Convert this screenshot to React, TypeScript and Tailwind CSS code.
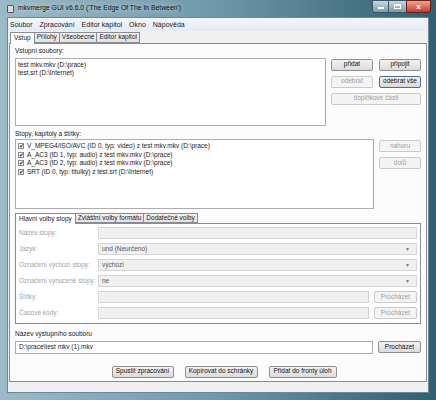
import { ReactNode } from 'react';

const Btn = ({
  children,
  disabled,
  focus,
  className = '',
}: {
  children: ReactNode;
  disabled?: boolean;
  focus?: boolean;
  className?: string;
}) => (
  <div
    className={`flex h-[12px] items-center justify-center whitespace-nowrap rounded-[2px] border ${
      disabled
        ? 'border-[#c9c9c9] bg-[#f4f4f4] text-[#a0a0a0]'
        : focus
        ? 'border-[#4a6f8a] bg-gradient-to-b from-[#f2f2f2] to-[#d9d9d9] text-[#111]'
        : 'border-[#8e8f8f] bg-gradient-to-b from-[#f2f2f2] to-[#dcdcdc] text-[#111]'
    } ${className}`}
  >
    {children}
  </div>
);

const Row = ({ label, children }: { label: string; children: ReactNode }) => (
  <div className="flex h-[12px] items-center">
    <div className="w-[79px] shrink-0 whitespace-nowrap text-[#a3a3a3]">{label}</div>
    {children}
  </div>
);

const Box = ({ text = '', combo }: { text?: string; combo?: boolean }) => (
  <div className="flex h-full flex-1 items-center justify-between border border-[#d5d5d5] bg-[#f0f0f0] pl-[3px] pr-[6px] text-[#555]">
    <span>{text}</span>
    {combo && <span className="text-[5px] text-[#777]">▼</span>}
  </div>
);

const tracks = [
  'V_MPEG4/ISO/AVC (ID 0, typ: video) z test mkv.mkv (D:\\prace)',
  'A_AC3 (ID 1, typ: audio) z test mkv.mkv (D:\\prace)',
  'A_AC3 (ID 2, typ: audio) z test mkv.mkv (D:\\prace)',
  'SRT (ID 0, typ: titulky) z test.srt (D:\\Internet)',
];

export default function App() {
  return (
    <div
      className="flex h-[400px] w-[436px] flex-col bg-gradient-to-r from-[#9bbac8] via-[#6e98a8] to-[#2f5f70] px-[7px] pb-[7px] text-[6.5px] leading-none text-[#1a1a1a]"
      style={{ fontFamily: '"Liberation Sans", Arial, sans-serif' }}
    >
      {/* title bar */}
      <div className="relative flex h-[17px] shrink-0 items-center gap-[4px]">
        <div className="h-[8px] w-[7px] rounded-[1px] border border-[#555] bg-[#ddd]" />
        <span className="text-[6.8px] text-[#111] [text-shadow:0_0_6px_#fff]">
          mkvmerge GUI v6.6.0 (&apos;The Edge Of The In Between&apos;)
        </span>
        <div className="absolute -right-[2px] top-0 flex h-[13px]">
          <div className="flex w-[17px] items-end justify-center rounded-bl-[3px] border border-[#3b5766] bg-gradient-to-b from-[#c6d7e0] to-[#7c9cad] pb-[3px]">
            <div className="h-[2px] w-[6px] bg-white" />
          </div>
          <div className="flex w-[17px] items-center justify-center border-y border-[#3b5766] bg-gradient-to-b from-[#c6d7e0] to-[#7c9cad]">
            <div className="h-[5px] w-[7px] border border-t-2 border-white" />
          </div>
          <div className="flex w-[25px] items-center justify-center rounded-br-[3px] border border-[#6d2118] bg-gradient-to-b from-[#e8a493] to-[#c23a22] text-[8px] font-bold text-white">
            x
          </div>
        </div>
      </div>

      {/* client */}
      <div className="flex flex-1 flex-col border border-[#6c8894] bg-[#f0f0f0]">
        {/* menu */}
        <div className="flex h-[13px] shrink-0 items-center gap-[7px] bg-gradient-to-b from-[#f3f6fb] to-[#e4ebf4] pl-[2px] text-[7px]">
          <span>Soubor</span>
          <span>Zpracování</span>
          <span>Editor kapitol</span>
          <span>Okno</span>
          <span>Nápověda</span>
        </div>

        {/* tabs */}
        <div className="flex h-[12px] shrink-0 items-end pl-[2px]">
          <div className="z-10 -mb-px flex h-[12px] items-center border border-b-0 border-[#898c95] bg-white px-[3px]">Vstup</div>
          <div className="flex h-[11px] items-center border border-l-0 border-[#898c95] bg-gradient-to-b from-[#f2f2f2] to-[#e3e3e3] px-[2px]">Přílohy</div>
          <div className="flex h-[11px] items-center border border-l-0 border-[#898c95] bg-gradient-to-b from-[#f2f2f2] to-[#e3e3e3] px-[2px]">Všeobecné</div>
          <div className="flex h-[11px] items-center border border-l-0 border-[#898c95] bg-gradient-to-b from-[#f2f2f2] to-[#e3e3e3] px-[2px]">Editor kapitol</div>
        </div>

        <div className="mx-[1px] flex flex-col border border-[#898c95] bg-[#fcfcfc] px-[5px] pb-[3px]">
          <div className="pt-[4px]">Vstupní soubory:</div>
          <div className="mt-[3px] flex gap-[5px]">
            <div className="h-[68px] flex-1 border border-[#abadb3] bg-white pl-[2px] pt-[2px] leading-[8px]">
              <div>test mkv.mkv (D:\prace)</div>
              <div>test.srt (D:\Internet)</div>
            </div>
            <div className="grid w-[90px] grid-cols-2 content-start gap-x-[6px] gap-y-[5px] pt-px">
              <Btn>přidat</Btn>
              <Btn>připojit</Btn>
              <Btn disabled>odebrat</Btn>
              <Btn focus>odebrat vše</Btn>
              <Btn disabled className="col-span-2">doplňkové části</Btn>
            </div>
          </div>

          <div className="mt-[5px]">Stopy, kapitoly a štítky:</div>
          <div className="mt-[2px] flex gap-[5px]">
            <div className="h-[70px] flex-1 border border-[#abadb3] bg-white pl-[2px] pt-[2px] leading-[8.5px]">
              {tracks.map((t) => (
                <div key={t} className="flex items-center gap-[3px]">
                  <span className="flex h-[6px] w-[6px] items-center justify-center border border-[#8f8f8f] text-[6px] leading-none">✔</span>
                  <span>{t}</span>
                </div>
              ))}
            </div>
            <div className="flex w-[42px] flex-col gap-[5px] pt-px">
              <Btn disabled>nahoru</Btn>
              <Btn disabled>dolů</Btn>
            </div>
          </div>

          {/* inner tabs */}
          <div className="mt-[4px] flex h-[10px] items-end">
            <div className="z-10 -mb-px flex h-[11px] items-center border border-b-0 border-[#898c95] bg-white px-[3px]">Hlavní volby stopy</div>
            <div className="flex h-[10px] items-center border border-l-0 border-[#898c95] bg-gradient-to-b from-[#f2f2f2] to-[#e3e3e3] px-[2px]">Zvláštní volby formátu</div>
            <div className="flex h-[10px] items-center border border-l-0 border-[#898c95] bg-gradient-to-b from-[#f2f2f2] to-[#e3e3e3] px-[2px]">Dodatečné volby</div>
          </div>
          <div className="flex flex-col gap-[4px] border border-[#898c95] bg-white px-[3px] pb-[4px] pt-[3px]">
            <Row label="Název stopy:">
              <Box />
            </Row>
            <Row label="Jazyk:">
              <Box text="und (Neurčeno)" combo />
            </Row>
            <Row label="Označení výchozí stopy:">
              <Box text="výchozí" combo />
            </Row>
            <Row label="Označení vynucené stopy:">
              <Box text="ne" combo />
            </Row>
            <Row label="Štítky:">
              <Box />
              <Btn disabled className="ml-[5px] w-[43px]">Procházet</Btn>
            </Row>
            <Row label="Časové kódy:">
              <Box />
              <Btn disabled className="ml-[5px] w-[43px]">Procházet</Btn>
            </Row>
          </div>

          <div className="mt-[7px]">Název výstupního souboru</div>
          <div className="mt-[3px] flex h-[13px] items-center gap-[5px]">
            <div className="flex h-full flex-1 items-center border border-[#abadb3] bg-white pl-[3px]">D:\prace\test mkv (1).mkv</div>
            <Btn className="w-[43px]">Procházet</Btn>
          </div>

          <div className="mt-[12px] flex justify-center gap-[11px] pl-[12px]">
            <Btn className="w-[62px]">Spustit zpracování</Btn>
            <Btn className="w-[73px]">Kopírovat do schránky</Btn>
            <Btn className="w-[68px]">Přidat do fronty úloh</Btn>
          </div>
        </div>
        <div className="flex-1 bg-[#f0f0f0]" />
      </div>
    </div>
  );
}
